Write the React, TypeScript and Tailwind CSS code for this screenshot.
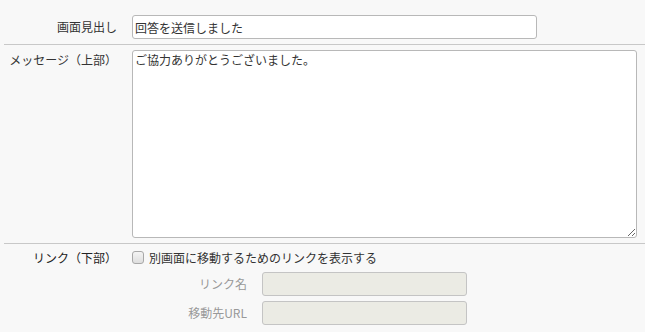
import React from "react";

const font = { fontFamily: '"Noto Sans CJK JP", "Noto Sans", sans-serif' };

export default function App() {
  return (
    <div
      className="w-full h-[332px] bg-[#f8f8f8] pt-[15px] text-[12px] leading-[16px] text-[#333]"
      style={font}
    >
      {/* Row 1 */}
      <div className="flex items-center h-[24px]">
        <div className="w-[117px] text-right shrink-0">画面見出し</div>
        <input
          type="text"
          defaultValue="回答を送信しました"
          className="ml-[15px] w-[405px] h-[24px] border border-[#b8b8b8] rounded-[3px] bg-white px-[2px] text-[12px] text-[#333] outline-none"
          style={font}
        />
      </div>
      <div className="mt-[5px] ml-[4px] border-t border-[#c8c8c8]" />

      {/* Row 2 */}
      <div className="flex mt-[5px]">
        <div className="w-[117px] text-right shrink-0 pt-[2px] whitespace-nowrap">メッセージ（上部）</div>
        <textarea
          defaultValue="ご協力ありがとうございました。"
          className="ml-[15px] w-[505px] h-[188px] border border-[#b8b8b8] rounded-[3px] bg-white px-[2px] py-[1px] text-[12px] leading-[16px] text-[#333] outline-none"
          style={font}
        />
      </div>
      <div className="mt-[5px] ml-[4px] border-t border-[#c8c8c8]" />

      {/* Row 3 */}
      <div className="flex items-center h-[27px]">
        <div className="w-[117px] text-right shrink-0 text-[#222]">リンク（下部）</div>
        <div className="ml-[15px] flex items-center">
          <div className="w-[12px] h-[13px] rounded-[3px] border border-[#a8a8a8] bg-gradient-to-b from-[#f4f4f4] to-[#dedede]" />
          <span className="ml-[5px]">別画面に移動するためのリンクを表示する</span>
        </div>
      </div>

      <div className="mt-[1px] flex flex-col gap-[5px]">
        <div className="flex items-center h-[24px]">
          <div className="w-[247px] text-right shrink-0 text-[#999]">リンク名</div>
          <input
            type="text"
            disabled
            className="ml-[15px] w-[205px] h-[24px] border border-[#c4c4c4] rounded-[3px] bg-[#ebebe4]"
          />
        </div>
        <div className="flex items-center h-[24px]">
          <div className="w-[247px] text-right shrink-0 text-[#999]">移動先URL</div>
          <input
            type="text"
            disabled
            className="ml-[15px] w-[205px] h-[24px] border border-[#c4c4c4] rounded-[3px] bg-[#ebebe4]"
          />
        </div>
      </div>
    </div>
  );
}
